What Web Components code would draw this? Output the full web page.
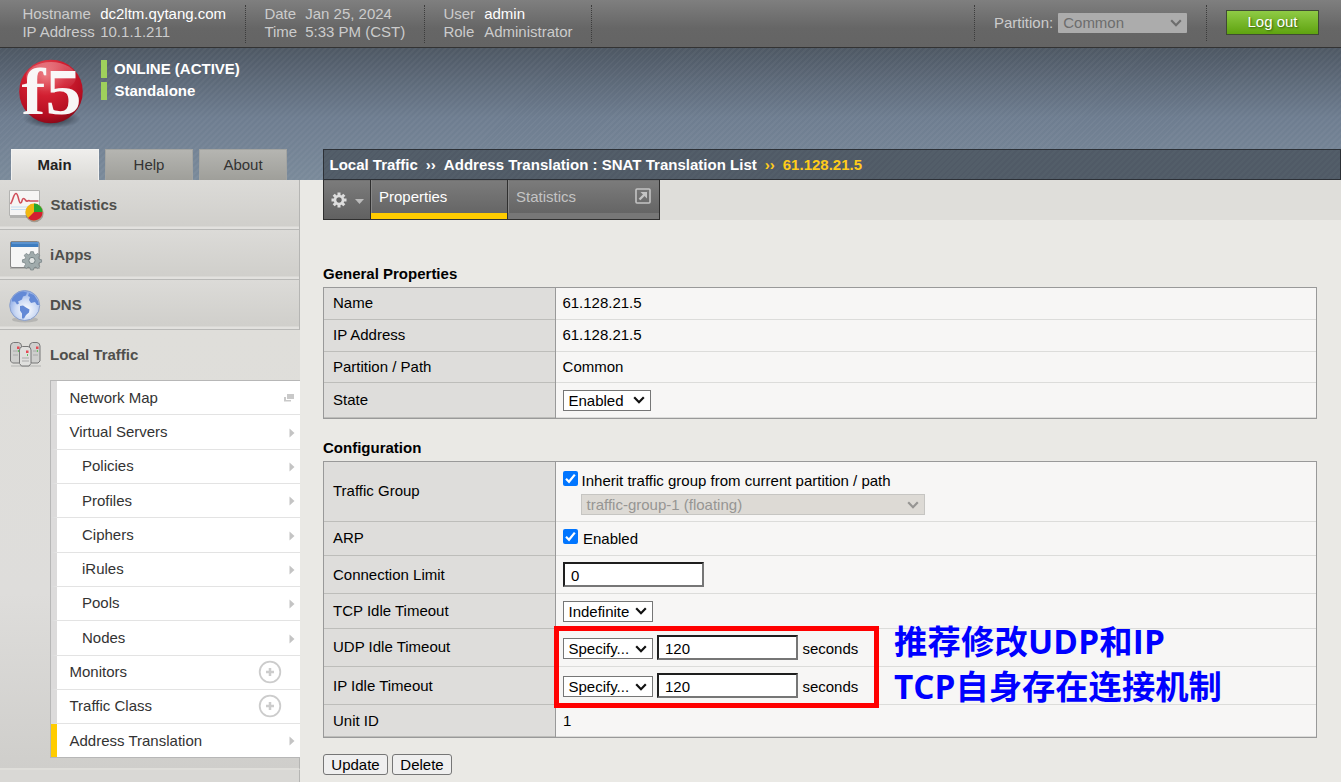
<!DOCTYPE html>
<html lang="en">
<head>
<meta charset="utf-8">
<title>BIG-IP - dc2ltm.qytang.com</title>
<style>
html,body{margin:0;padding:0;background:#eae9e5;overflow:hidden}
body{font:15px/17px "Liberation Sans",Arial,sans-serif;color:#000}
</style>
</head>
<body>
<bigip-app></bigip-app>
<script>
function define(name, html) {
  const t = document.createElement('template');
  t.innerHTML = typeof html === 'string' ? html : '';
  customElements.define(name, class extends HTMLElement {
    constructor() {
      super();
      this.attachShadow({ mode: 'open' });
    }
    connectedCallback() {
      if (this.shadowRoot.childNodes.length) return;
      if (typeof html === 'function') t.innerHTML = html(this);
      this.shadowRoot.append(t.content.cloneNode(true));
    }
  });
}
const chevron = (c) => `<svg width="12" height="8" viewBox="0 0 12 8"><path d="M1.2 1.3 6 6.2 10.8 1.3" fill="none" stroke="${c}" stroke-width="2.2"/></svg>`;

/* Top bar */
define('top-info', e => `<style>
:host{display:grid;grid-template-columns:var(--kw) auto;height:38px;margin-top:5px;padding-left:var(--pl);box-sizing:border-box;width:var(--w);align-content:start;grid-auto-rows:18px;line-height:18px;color:#ccc;
border-right:1px dotted #3c3c3c;white-space:nowrap}
.hl{color:#fff}
</style><span>${e.getAttribute('k1')}</span><span class="${e.hasAttribute('hl') ? 'hl' : ''}">${e.getAttribute('v1')}</span><span>${e.getAttribute('k2')}</span><span>${e.getAttribute('v2')}</span>`);

define('top-bar', `<style>
:host{display:flex;height:47px;background:linear-gradient(#7f7f7f 0,#666 60%,#646464);border-bottom:1px solid #333;color:#ccc}
.gap{flex:1;border-right:1px dotted #3c3c3c;height:36px;margin-top:5px}
.part{display:flex;width:232px;height:36px;margin-top:5px;border-right:1px dotted #3c3c3c;align-items:center;box-sizing:border-box;padding-left:19px}
.part>span{margin-top:-1px}
.sel{display:flex;align-items:center;justify-content:space-between;box-sizing:border-box;width:129px;height:20px;margin-left:5px;margin-top:-1px;padding:0 5px 0 5px;background:#acacac;border-radius:1px;color:#6d6d6d}
.out{box-sizing:border-box;width:93px;height:25px;margin:10px 22px 0 19px;border:1px solid #3f4a35;background:linear-gradient(#8fcb45,#5fa310);color:#fff;text-align:center;line-height:22px;text-shadow:1px 1px 2px #345c08}
</style>
<top-info hl k1="Hostname" v1="dc2ltm.qytang.com" k2="IP Address" v2="10.1.1.211" style="--pl:22.4px;--kw:77.800px;--w:246px"></top-info>
<top-info k1="Date" v1="Jan 25, 2024" k2="Time" v2="5:33 PM (CST)" style="--pl:18.4px;--kw:40.800px;--w:179px"></top-info>
<top-info hl k1="User" v1="admin" k2="Role" v2="Administrator" style="--pl:18.4px;--kw:40.800px;--w:167px"></top-info>
<div class="gap"></div>
<div class="part"><span>Partition:</span><div class="sel"><span>Common</span>${chevron('#6d6d6d')}</div></div>
<div class="out">Log out</div>`);

/* Logo and device status */
define('f5-logo', `<style>:host{display:block;width:72px;height:88px}svg{display:block}</style>
<svg width="72" height="88" viewBox="0 -8 72 88">
<defs><radialGradient id="b" cx=".42" cy=".25" r=".8"><stop offset="0" stop-color="#e9636b"/><stop offset=".4" stop-color="#d21f31"/><stop offset=".8" stop-color="#b30d20"/><stop offset="1" stop-color="#7d0816"/></radialGradient>
<radialGradient id="s"><stop offset="0" stop-color="#1c232c" stop-opacity=".9"/><stop offset="1" stop-color="#1c232c" stop-opacity="0"/></radialGradient>
<linearGradient id="g" x2="0" y2="1"><stop offset="0" stop-color="#fff" stop-opacity=".28"/><stop offset="1" stop-color="#fff" stop-opacity="0"/></linearGradient></defs>
<ellipse cx="37" cy="61" rx="29" ry="9" fill="url(#s)"/>
<circle cx="36" cy="33.500" r="31.800" fill="url(#b)"/>
<text x="6.500" y="56" font-family="Liberation Serif" font-weight="700" font-size="66" fill="#f8f6f6" textLength="60" lengthAdjust="spacingAndGlyphs">f5</text>
<ellipse cx="36" cy="19" rx="25" ry="15" fill="url(#g)"/>
</svg>`);
define('device-status', `<style>:host{display:block;padding-top:12px;color:#fff;font-weight:700}
div{box-sizing:border-box;height:18px;border-left:6px solid #9fd05c;padding-left:7px;line-height:18px;margin-bottom:4px;white-space:nowrap}
div+div{padding-left:7.5px}</style>
<div>ONLINE (ACTIVE)</div><div>Standalone</div>`);
define('nav-tab', `<style>:host{display:block;width:88px;height:31px;margin-right:6px;box-sizing:border-box;border:1px solid #a3a4a1;border-bottom:0;background:linear-gradient(#b5b5b1,#9f9f9a);text-align:center;line-height:30px;color:#333}
:host([active]){border-color:#f2f2f0;background:linear-gradient(#efeeec,#dcdbd7);font-weight:700;color:#222;padding-right:1px}</style><slot></slot>`);

/* Side navigation */
const icons = {
stats: `<path d="M2 4h30v26H2z" fill="#777" opacity=".35"/><path d="M1.500 2.500h30v25h-30z" fill="#f6f5f4" stroke="#b3b3b1"/><path d="M3 19h26M3 21.500h26" stroke="#c3dcf0"/><path d="M2.500 16C5 13 5.500 5.500 8 5.500S10.500 15 12.500 15s1-4.500 3-4.500 2 3.500 4 2.500 1.500 0 3 0h8" fill="none" stroke="#d0505b" stroke-width="1.600"/><circle cx="26.500" cy="25" r="9.200" fill="#5c4a3a" opacity=".4"/><circle cx="26" cy="24" r="8.500" fill="#f1b70f"/><path d="M26 24V15.500a8.500 8.500 0 0 1 8.500 8.500z" fill="#27a52e"/><path d="M26 24h8.500a8.500 8.500 0 0 1-14.500 6z" fill="#d31e31"/>`,
iapps: `<path d="M2 5h30v26H2z" fill="#777" opacity=".35"/><rect x="2.500" y="3.500" width="28.500" height="26" rx="1.500" fill="#f6f6f6" stroke="#858585"/><path d="M3 4h27.500v5H3z" fill="#3e7dc0"/><path d="M4 5h26" stroke="#78a9dc"/><g transform="translate(24 22.500) scale(.97)"><path d="M-1.700-9.500h3.400l.6 2.800 2 .9 2.500-1.700 2.300 2.300-1.600 2.500.8 2 2.900.6v2.900l-2.900.6-.8 2 1.600 2.500-2.300 2.300-2.500-1.700-2 .9-.6 2.500h-3.400l-.6-2.500-2-.9-2.500 1.700-2.300-2.300 1.600-2.500-.8-2-2.900-.6V-.1l2.900-.6.8-2-1.600-2.500 2.300-2.300 2.500 1.700 2-.9z" transform="translate(0 -.7) scale(.88)" fill="#a0abac" stroke="#7f8a8c"/><circle r="3.200" fill="#e1e4e3" stroke="#738082"/></g>`,
dns: `<defs><radialGradient id="d" cx=".55" cy=".65" r=".65"><stop offset="0" stop-color="#fff"/><stop offset=".55" stop-color="#cbd9f4"/><stop offset="1" stop-color="#84a4e4"/></radialGradient></defs><ellipse cx="17" cy="31.500" rx="13" ry="3" fill="#999" opacity=".5"/><circle cx="16.700" cy="17.500" r="15" fill="url(#d)" stroke="#8a9fcb"/><path d="M4 11Q8 4 15 3.500l4 1-1 3-3 1-1 3-4 2 1 2-2 1-2-3-3 0zM12 18l3-.5 3 2 3.500 2-.5 3-3 2.500-2 3.500-2 0 0-5-2-3zM21 5l5 2 4 6 1 4-2 0-2-3-4 1-2-3 1-3-2-1z" fill="#6389d6"/>`,
traffic: `<path d="M3 27h30v2H3z" fill="#999" opacity=".3"/><g stroke="#777" fill="#cfcfcd"><path d="M2.500 8q0-3 3-3.500h5q3 .5 3 3.500v15l-2 2h-7l-2-2zM21.500 8q0-3 3-3.500h4.500q3 .5 3 3.500v15l-2 2h-6.500l-2-2z"/><path d="M11.500 12q0-3 3-3.500h5.500q3 .5 3 3.500v13.500l-2 2.500h-7.500l-2-2.500z" fill="#e0e0de"/></g><path d="M5 13h5M5 17h5M25 13h5M25 17h5M14 20h7M14 23h7" stroke="#aaa"/><path d="M9 8.500h2.500V11H9zM28 8.500h2.500V11H28zM18 12.500h2.500V15H18z" fill="#e34b55"/><path d="M10 12h1v2h-1zM29 12h1v2h-1zM19 16h1v2h-1z" fill="#65bd62"/>`
};
define('nav-item', e => `<style>
:host{display:flex;box-sizing:border-box;height:50px;padding-left:8px;align-items:center;font-weight:700;color:#4f4f4c;background:linear-gradient(#dcdbd8,#d0cfcb 46px,#e2e1de 47px,#e2e1de 49px);border-bottom:1px solid #b9b9b7;border-right:1px solid #b5b5b3}
:host([open]){background:none;border-color:transparent}
svg{width:36px;height:36px;margin:3px 6px 0 0;flex:none}
span{padding-left:var(--x,0)}
</style><svg viewBox="0 0 36 36">${icons[e.getAttribute('icon')]}</svg><span><slot></slot></span>`);

define('sub-item', e => { const a = e.getAttribute('mark') || 'arrow'; return `<style>
:host{display:flex;box-sizing:border-box;height:var(--h,34px);align-items:center;background:#fff;border-left:6px solid #dcdbdb;border-bottom:1px solid #e3e3e3;padding:0 ${a === 'add' ? 18 : 5.5}px var(--pb,1px) 12.5px;color:#333;justify-content:space-between}
:host([nested]){padding-left:25px}
:host([active]){border-left-color:#fc0;border-bottom:0}
svg{flex:none;position:relative;top:${a === 'add' ? 0 : 1}px}
</style><span><slot></slot></span>${
a === 'add' ? '<svg width="24" height="24" viewBox="0 0 24 24" fill="none" stroke="#ccc"><circle cx="12" cy="12" r="10.300" stroke-width="1.800"/><path d="M12 8v8M8 12h8" stroke-width="2.500"/></svg>' :
a === 'window' ? '<svg width="12" height="10" viewBox="0 0 12 10" fill="#c9c9c9"><path d="M4 1h7v5H4z"/><path d="M1 4h2v3h5v1.500H1z"/></svg>' :
'<svg width="6" height="10" viewBox="0 0 6 10"><path d="M.5.500 5.500 5 .5 9.500z" fill="#c4c4c4"/></svg>'}`; });

define('side-nav', `<style>
:host{display:block;height:602px;width:300px;overflow:hidden;background:#dedddb}
.open{height:440px;background:linear-gradient(#dfdeda 0,#dedddb 60%,#cfcecb 100%);border-bottom:1px solid #b9b9b7;box-sizing:border-box}
.sub{width:250px;box-sizing:border-box;margin-left:50px;border:1px solid #b7b7b7;border-right:0}
.next{height:20px;background:#d9d8d5;border-right:1px solid #b5b5b3}
.tail{height:10px;border-right:1px solid #b5b5b3;border-bottom:2px solid #dfdeda}
</style>
<nav-item icon="stats" style="--x:.5px">Statistics</nav-item><nav-item icon="iapps">iApps</nav-item><nav-item icon="dns">DNS</nav-item>
<div class="open"><nav-item icon="traffic" open>Local Traffic</nav-item>
<div class="sub">
<sub-item mark="window">Network Map</sub-item>
<sub-item style="--h:35px">Virtual Servers</sub-item>
<sub-item nested style="--pb:2px">Policies</sub-item><sub-item nested>Profiles</sub-item>
<sub-item nested style="--h:35px">Ciphers</sub-item><sub-item nested style="--pb:2px">iRules</sub-item><sub-item nested style="--pb:2px">Pools</sub-item>
<sub-item nested style="--h:35px">Nodes</sub-item>
<sub-item mark="add" style="--pb:2px">Monitors</sub-item><sub-item mark="add" style="--pb:2px">Traffic Class</sub-item>
<sub-item active style="--h:33px">Address Translation</sub-item>
</div><div class="tail"></div></div><div class="next"></div>`);

define('side-column', `<style>
:host{display:block;width:300px}
.head{display:flex;height:101px;box-sizing:border-box;padding-left:15px}
f5-logo{margin:2px 14px 0 0}
.tabs{display:flex;padding-left:11px;height:31px}
</style><div class="head"><f5-logo></f5-logo><device-status></device-status></div>
<div class="tabs"><nav-tab active>Main</nav-tab><nav-tab>Help</nav-tab><nav-tab>About</nav-tab></div>
<side-nav></side-nav>`);

/* Main column */
define('crumb-bar', `<style>
:host{display:flex;box-sizing:border-box;height:31px;border:1px solid #2c3036;padding-left:5.5px;align-items:center;color:#fff;font-weight:700;white-space:pre;
background:repeating-linear-gradient(135deg,#505a66 0 2px,#535e69 2px 4.250px)}
i{font-style:normal;margin:0 8px}
.mid{letter-spacing:.015px}
.y{color:#ffcc1a}
</style><span>Local Traffic</span><i>››</i><span class="mid">Address Translation : SNAT Translation List</span><i class="y">››</i><span class="y">61.128.21.5</span>`);
define('page-tabs', `<style>
:host{display:flex;height:40px;background:#dfdeda}
div{box-sizing:border-box;border:1px solid #2f2f2f;border-top:0;border-left:0;background:linear-gradient(#6b6b6b 0,#7b7b7b 1px,#616161 100%);height:40px}
.g{width:48px;border-left:1px solid #2f2f2f;display:flex;align-items:center;padding-left:7px;gap:8px}
.t{color:#fff;padding:8px 8px 0 8px}
.p{width:137px;border-bottom:0;box-shadow:inset 0 -1px #2f2f2f,inset 0 -7px #fc0,inset 1px 0 #888}
.s{width:152px;display:flex;justify-content:space-between;color:#c4c4c4;box-shadow:inset 0 -6px #777,inset 1px 0 #888}
</style>
<div class="g"><svg width="16" height="16" viewBox="-8 -8 16 16"><g stroke="#ddd" stroke-width="3"><path d="M0-7.500v15M-7.500 0h15M-5.300-5.300 5.300 5.300M5.300-5.300-5.300 5.300"/></g><circle r="4" fill="#666" stroke="#ddd" stroke-width="2.600"/></svg><svg width="9" height="5" style="margin-top:3px"><path d="M0 0h9L4.500 5z" fill="#bbb"/></svg></div>
<div class="t p">Properties</div>
<div class="t s"><span>Statistics</span><svg width="16" height="16" viewBox="0 0 16 16" fill="none" stroke="#c4c4c4"><rect x="1" y="1" width="14" height="14" rx="1" stroke-width="1.600"/><path d="M4.500 11.500 9.500 6.500" stroke-width="2.400"/><path d="M5.500 4h6.500v6.500z" fill="#c4c4c4" stroke="none"/></svg></div>`);

define('drop-down', `<style>
:host{display:inline-flex;box-sizing:border-box;height:21px;width:var(--w);border:1px solid #767676;background:#fff;align-items:center;justify-content:space-between;padding:0 5px 0 4.500px;white-space:nowrap;color:var(--c,#000)}
:host([disabled]){background:#dddad5;border-color:#c6c5c2;--c:#969593}
path{stroke:var(--c,#111)}
</style><slot></slot>${chevron('#111').replace('stroke="#111"', '')}`);
define('text-box', `<style>
:host{display:inline-block;box-sizing:border-box;width:141px;height:25px;background:#fff;border:2px solid;border-color:#1e1e1e #767676 #767676 #1e1e1e;padding:3px 0 0 6px}
</style><slot></slot>`);
define('check-box', `<style>:host{display:inline-block;width:15px;height:15px}svg{display:block}</style>
<svg width="15" height="15"><rect width="15" height="15" rx="2" fill="#0075ff"/><path d="M3 7.800 6 10.800 11.800 3.600" fill="none" stroke="#fff" stroke-width="2.200"/></svg>`);
define('push-button', `<style>:host{display:block;box-sizing:border-box;height:21px;width:var(--w);border:1px solid #767676;border-radius:3px;background:#efefef;text-align:center;line-height:20px}</style><slot></slot>`);
define('prop-row', e => `<style>
:host{display:grid;grid-template-columns:231px 1px 1fr;height:var(--h)}
.k{background:#dedddb;border-bottom:1px solid #bdbdba;padding:0 0 var(--kb,2px) 9px;display:flex;align-items:center;box-sizing:border-box}
.l{background:#999}
.v{background:#f7f6f5;border-bottom:1px solid #dcdcda;padding:var(--vt,0) 0 var(--vb,2px) var(--vl,7px);display:flex;align-items:center;box-sizing:border-box;gap:4px}
</style><div class="k">${e.getAttribute('label')}</div><div class="l"></div><div class="v"><slot></slot></div>`);
define('prop-table', e => `<style>
:host{display:block;position:relative}
h2{font:700 15px/17px "Liberation Sans",Arial,sans-serif;margin:0 0 5px}
.b{border:1px solid #999;box-sizing:border-box}
</style><h2>${e.getAttribute('heading')}</h2><div class="b"><slot></slot></div><slot name="note"></slot>`);
define('note-box', `<style>
:host{position:absolute;left:231px;top:187px;display:flex;white-space:nowrap}
.r{width:325px;height:82px;box-sizing:border-box;border:5px solid #f00}
.t{margin:-7px 0 0 15px;font:700 33.300px/45px "Open Sans","Noto Sans CJK SC",sans-serif;color:#00f}
.t div:first-child{letter-spacing:.2px}
</style><div class="r"></div><div class="t"><div>推荐修改UDP和IP</div><div>TCP自身存在连接机制</div></div>`);

define('main-column', `<style>
:host{display:block;flex:1;padding:101px 0 0 23px}
.body{width:994px;padding-top:45px}
.tg{display:grid;grid-template-columns:18px auto;grid-template-rows:23px 21px}
prop-table+prop-table{margin-top:20px}
.btns{display:flex;gap:4px;margin-top:16px}
</style>
<crumb-bar></crumb-bar><page-tabs></page-tabs>
<div class="body">
<prop-table heading="General Properties">
<prop-row label="Name" style="--h:32px;--vl:6.400px">61.128.21.5</prop-row>
<prop-row label="IP Address" style="--h:32px;--vl:6.400px">61.128.21.5</prop-row>
<prop-row label="Partition / Path" style="--h:31px;--kb:1px;--vb:1px;--vl:6.600px">Common</prop-row>
<prop-row label="State" style="--h:35px;--vb:0px"><drop-down style="--w:88px">Enabled</drop-down></prop-row>
</prop-table>
<prop-table heading="Configuration">
<prop-row label="Traffic Group" style="--h:60px;--vb:0;--vt:3px"><div class="tg"><check-box></check-box><span style="padding:1px 0 0 .6px">Inherit traffic group from current partition / path</span><span></span><drop-down disabled style="--w:344px">traffic-group-1 (floating)</drop-down></div></prop-row>
<prop-row label="ARP" style="--h:34px;--vb:0"><check-box style="margin-top:-5px"></check-box><span style="margin-left:1px">Enabled</span></prop-row>
<prop-row label="Connection Limit" style="--h:38px;--vb:0;--kb:0"><text-box>0</text-box></prop-row>
<prop-row label="TCP Idle Timeout" style="--h:35px;--vb:0;--kb:1px"><drop-down style="--w:90px">Indefinite</drop-down></prop-row>
<prop-row label="UDP Idle Timeout" style="--h:38px;--vb:0"><drop-down style="--w:90px;margin-top:2px">Specify...</drop-down><text-box>120</text-box><span style="margin:2px 0 0 .4px">seconds</span></prop-row>
<prop-row label="IP Idle Timeout" style="--h:38px;--vb:0;--kb:0"><drop-down style="--w:90px;margin-top:2px">Specify...</drop-down><text-box>120</text-box><span style="margin:2px 0 0 .4px">seconds</span></prop-row>
<prop-row label="Unit ID" style="--h:32px;--kb:0;--vb:0">1</prop-row>
<note-box slot="note"></note-box>
</prop-table>
<div class="btns"><push-button style="--w:65px">Update</push-button><push-button style="--w:60px">Delete</push-button></div>
</div>`);

define('bigip-app', `<style>
:host{display:block;width:1341px;height:782px;overflow:hidden}
.cols{display:flex;height:734px;background:
repeating-linear-gradient(135deg,rgba(255,255,255,.035) 0 2px,transparent 2px 4.250px) 0 0/100% 132px no-repeat,
linear-gradient(#4e5864,#6e7d90 70px,#7a8a9a) 0 0/100% 132px no-repeat,#eae9e5}
</style><top-bar></top-bar><div class="cols"><side-column></side-column><main-column></main-column></div>`);
</script>
</body>
</html>
